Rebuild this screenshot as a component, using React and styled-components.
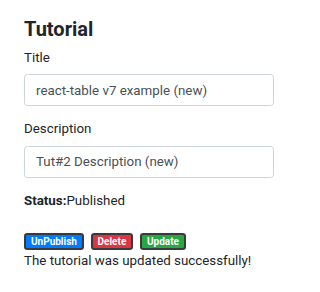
import React from "react";
import styled, { createGlobalStyle } from "styled-components";

const GlobalStyle = createGlobalStyle`
  html, body {
    margin: 0;
    padding: 0;
    background: #fff;
  }
  body {
    font-family: Roboto, "Open Sans", sans-serif;
    font-size: 13.33px;
    line-height: 1.5;
    color: #212529;
  }
  *, *::before, *::after {
    box-sizing: border-box;
  }
`;

const EditForm = styled.div`
  width: 298px;
  padding: 17px 24px;
`;

const Heading = styled.h4`
  margin: 0 0 6.67px;
  font-size: 20px;
  font-weight: 700;
  line-height: 1.2;
`;

const FormGroup = styled.div`
  margin-bottom: 13.33px;
`;

const Label = styled.label`
  display: inline-block;
  margin-bottom: 6.67px;
`;

const Input = styled.input`
  display: block;
  width: 100%;
  height: 31.67px;
  padding: 5px 11px;
  font-family: inherit;
  font-size: 13.33px;
  line-height: 1.5;
  color: #495057;
  background: #fff;
  border: 1px solid #ced4da;
  border-radius: 3.33px;
`;

const Badge = styled.button`
  display: inline-block;
  margin-right: ${(p) => (p.$last ? "0" : "6.67px")};
  padding: 1.5px 5px;
  font-family: inherit;
  font-size: 10px;
  font-weight: 700;
  line-height: 1;
  color: #fff;
  background: ${(p) => p.$color};
  border: 2px solid #3a3a3a;
  border-radius: 3.33px;
  vertical-align: baseline;
`;

const Message = styled.p`
  margin: 0 0 13.33px;
`;

export default function App() {
  return (
    <>
      <GlobalStyle />
      <EditForm>
        <Heading>Tutorial</Heading>
        <form>
          <FormGroup>
            <Label htmlFor="title">Title</Label>
            <Input id="title" defaultValue="react-table v7 example (new)" />
          </FormGroup>
          <FormGroup>
            <Label htmlFor="description">Description</Label>
            <Input id="description" defaultValue="Tut#2 Description (new)" />
          </FormGroup>
          <FormGroup>
            <Label>
              <strong>Status:</strong>
            </Label>
            Published
          </FormGroup>
        </form>
        <Badge $color="#007bff">UnPublish</Badge>
        <Badge $color="#dc3545">Delete</Badge>
        <Badge $color="#28a745" $last>
          Update
        </Badge>
        <Message>The tutorial was updated successfully!</Message>
      </EditForm>
    </>
  );
}
